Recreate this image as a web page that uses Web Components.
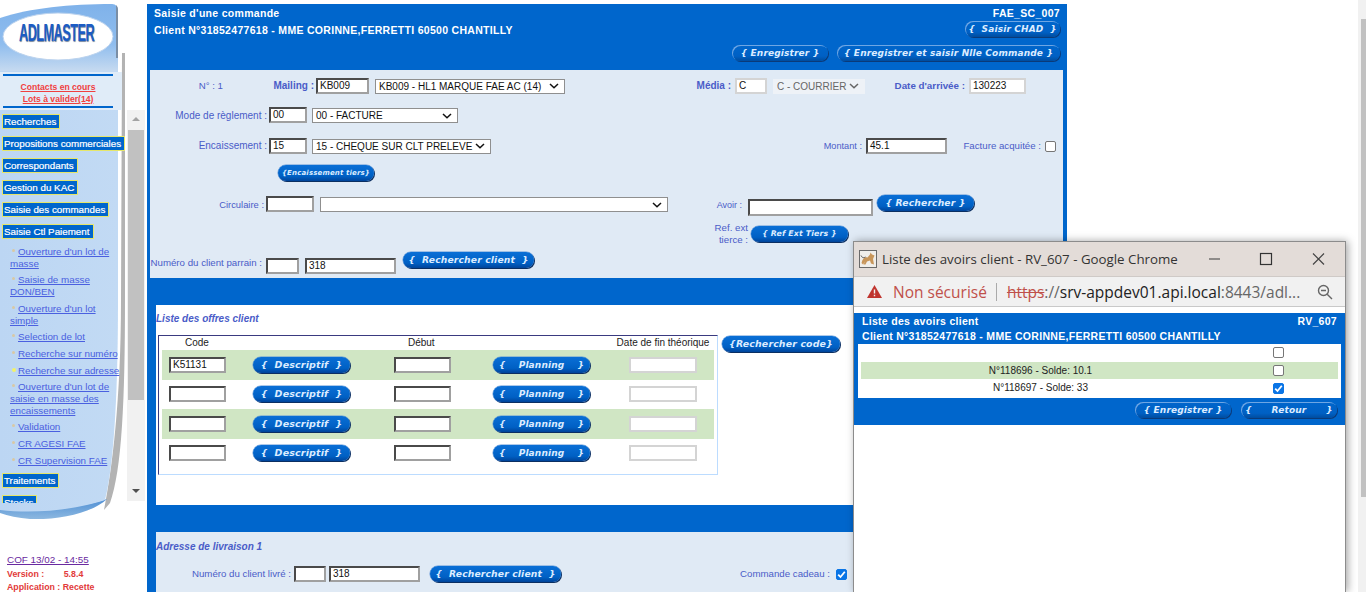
<!DOCTYPE html>
<html lang="fr">
<head>
<meta charset="utf-8">
<title>Saisie d'une commande</title>
<style>
  html, body { margin: 0; height: 592px; overflow: hidden; background: #fff; }
  body { font-family: "Liberation Sans", Arial, sans-serif; font-size: 10px; position: relative; }
  #page { display: flex; height: 592px; }
  adl-pagebar { margin-left: auto; }
</style>
</head>
<body>
<div id="page">
  <adl-sidebar></adl-sidebar>
  <adl-order></adl-order>
  <adl-pagebar></adl-pagebar>
</div>
<adl-avoirs></adl-avoirs>
<script>
class AdlBtn extends HTMLElement {
  constructor() {
    super();
    this.attachShadow({ mode: 'open' });
    const w = this.getAttribute('w') || 97;
    const size = this.getAttribute('size') || 9.2;
    this.shadowRoot.innerHTML = `
      <style>
        :host { display: inline-flex; flex: none; }
        span {
          display: flex; align-items: center; justify-content: center;
          width: ${w}px; height: 16px; box-sizing: border-box; white-space: pre;
          border-radius: 8px; background: linear-gradient(#0a6fd6, #0060c4 70%, #00449a);
          box-shadow: 1px 1px 0 #0b2f62, 0 0 0 .5px #5c93d6;
          color: #dcecff; font: italic bold ${size}px/16px "DejaVu Sans", sans-serif; letter-spacing: .15px;
        }
        :host([ghost]) span {
          background: linear-gradient(#0066cc, #0060c4 70%, #004c9e);
          box-shadow: 1px 1px 0 #0b3a78, inset 1px 1px 0 #6ea6e4;
        }
      </style>
      <span><slot></slot></span>`;
  }
}
customElements.define('adl-btn', AdlBtn);

class AdlInput extends HTMLElement {
  constructor() {
    super();
    this.attachShadow({ mode: 'open' });
    const w = this.getAttribute('w') || 50;
    const h = this.getAttribute('h') || 16;
    this.shadowRoot.innerHTML = `
      <style>
        :host { display: inline-block; flex: none; }
        div {
          width: ${w}px; height: ${h}px; box-sizing: border-box; background: #fff;
          border: 2px solid; border-color: #4a4a4a #a0a0a0 #a0a0a0 #4a4a4a;
          padding: 0 2px; font: 10px/${h - 4}px "Liberation Sans", sans-serif; color: #111;
          overflow: hidden; white-space: nowrap;
        }
        :host([off]) div { border-color: #d4d4d4; }
      </style>
      <div><slot></slot></div>`;
  }
}
customElements.define('adl-input', AdlInput);

class AdlSelect extends HTMLElement {
  constructor() {
    super();
    this.attachShadow({ mode: 'open' });
    const w = this.getAttribute('w') || 100;
    this.shadowRoot.innerHTML = `
      <style>
        :host { display: inline-block; flex: none; }
        div {
          display: flex; align-items: center; justify-content: space-between;
          width: ${w}px; height: 15px; box-sizing: border-box; background: #fff;
          border: 1px solid #8f8f8f; padding: 0 5px 0 3px;
          font: 10px/13px "Liberation Sans", sans-serif; color: #111; white-space: nowrap;
        }
        svg { flex: none; }
        :host([off]) div { background: #eef2f7; border-color: #eef2f7; color: #666; }
      </style>
      <div><span><slot></slot></span>
        <svg width="10" height="6" viewBox="0 0 10 6"><path d="M1 1 5 4.8 9 1" fill="none" stroke="currentColor" stroke-width="1.5"/></svg>
      </div>`;
  }
}
customElements.define('adl-select', AdlSelect);

class AdlCheck extends HTMLElement {
  constructor() {
    super();
    this.attachShadow({ mode: 'open' });
    const on = this.hasAttribute('checked');
    this.shadowRoot.innerHTML = `
      <style>
        :host { display: inline-block; flex: none; width: 11px; height: 11px; }
        div { width: 11px; height: 11px; box-sizing: border-box; border-radius: 2px; background: #fff; border: 1px solid #767676; }
        div.on { background: #0a75e6; border-color: #0a75e6; }
        svg { display: block; }
      </style>
      <div class="${on ? 'on' : ''}">${on ? '<svg width="9" height="9" viewBox="0 0 9 9"><path d="M1.2 4.6 3.5 7 7.8 1.8" fill="none" stroke="#fff" stroke-width="1.8"/></svg>' : ''}</div>`;
  }
}
customElements.define('adl-check', AdlCheck);

// browser scrollbar of the page, cut by the right edge of the capture
class AdlPagebar extends HTMLElement {
  constructor() {
    super();
    this.attachShadow({ mode: 'open' });
    this.shadowRoot.innerHTML = `
      <style>
        :host { display: block; flex: none; width: 8px; height: 592px; background: #f1f1f1; }
        i { display: block; width: 5px; height: 478px; margin: 19px 0 0 3px; background: #c1c1c1; }
      </style>
      <i></i>`;
  }
}
customElements.define('adl-pagebar', AdlPagebar);

class AdlSidebar extends HTMLElement {
  constructor() {
    super();
    this.attachShadow({ mode: 'open' });
    const tops = ['Recherches', 'Propositions commerciales', 'Correspondants', 'Gestion du KAC', 'Saisie des commandes', 'Saisie Ctl Paiement'];
    const subs = ['Ouverture d\'un lot de masse', 'Saisie de masse DON/BEN', 'Ouverture d\'un lot simple', 'Selection de lot', 'Recherche sur numéro', 'Recherche sur adresse', 'Ouverture d\'un lot de saisie en masse des encaissements', 'Validation', 'CR AGESI FAE', 'CR Supervision FAE'];
    this.shadowRoot.innerHTML = `
      <style>
        :host { display: block; flex: none; width: 147px; height: 592px; position: relative; font: 10px/11.7px "Liberation Sans", sans-serif; }
        .art { position: absolute; left: 0; top: 0; }
        .logo { position: absolute; left: 19px; top: 21px; font: bold 24px/24px "Liberation Sans", sans-serif; letter-spacing: -1px; color: #1c5cc4; text-shadow: 1px 1px 1px #7d8ba0; transform: scaleX(.53); transform-origin: left; }
        .alerts { position: absolute; left: 3px; top: 74px; width: 110px; height: 34px; padding-top: 5px; box-sizing: border-box; text-align: center; color: #f04040; font-weight: bold; font-size: 8.6px; line-height: 12px; text-decoration: underline; border-top: 2px solid #0066cc; border-bottom: 2px solid #0066cc; }
        .menu { position: absolute; left: 2px; top: 114px; width: 126px; height: 389px; overflow: hidden; }
        .top { display: table; box-sizing: border-box; height: 15px; padding: 0 3px 0 1px; margin-bottom: 7px; border: 1px solid #e6e66a; background: #0066cc; color: #fff; font-size: 9.8px; line-height: 13px; white-space: nowrap; -webkit-text-stroke: .2px #fff; }
        .subs { margin: 3px 0 6.5px 8px; width: 106px; }
        .sub { margin-bottom: 5px; color: #4a60e0; text-decoration: underline; text-indent: 8px; font-size: 9.8px; position: relative; }
        .sub::before { content: ""; position: absolute; left: 2px; top: 3px; width: 3px; height: 3px; border-radius: 50%; background: #d9c8a4; }
        .sub.hot::before { background: #f2f26a; width: 4px; height: 4px; }
        .sub.nw { white-space: nowrap; }
        .scroll { position: absolute; left: 127px; top: 110px; width: 18px; height: 391px; background: #f1f1f1; }
        .scroll i { position: absolute; left: 1px; top: 20px; width: 16px; height: 270px; background: #c1c1c1; }
        .scroll b { position: absolute; left: 5px; width: 0; height: 0; border: 4px solid transparent; }
        .scroll .u { top: 7px; border-bottom: 4px solid #a3a3a3; border-top: 0; }
        .scroll .d { top: 379px; border-top: 4px solid #505050; border-bottom: 0; }
        .foot { position: absolute; left: 7px; top: 553px; color: #e23a3a; font-weight: bold; font-size: 8.8px; line-height: 12.5px; white-space: pre; }
        .foot a { display: block; color: #6a2aa0; font-weight: 400; font-size: 9.9px; line-height: 13px; text-decoration: underline; margin-bottom: 2px; }
      </style>
      <svg class="art" width="130" height="530" viewBox="0 0 130 530">
        <defs>
          <linearGradient id="h" x1="0" y1="0" x2="0" y2="1"><stop offset="0" stop-color="#7fb2ea"/><stop offset=".6" stop-color="#8fbdee"/><stop offset="1" stop-color="#c6daf0"/></linearGradient>
          <linearGradient id="b" x1="0" y1="0" x2="1" y2="0"><stop offset="0" stop-color="#bcd6f3"/><stop offset="1" stop-color="#c2daf4"/></linearGradient>
          <linearGradient id="c" x1="0" y1="0" x2="0" y2="1"><stop offset="0" stop-color="#4f8fd4"/><stop offset="1" stop-color="#8db8e0"/></linearGradient>
        </defs>
        <path d="M122 53 H125 V300 C125 400 122 470 110 503 L104 510 C112 470 121 400 121 300Z" fill="#9a9a9a" opacity=".75"/>
        <path d="M0 505 C40 512 80 508 107 499 C92 513 60 520 30 519 C18 518 8 516 0 513Z" fill="url(#c)"/>
        <path d="M0 71 H118 V300 C118 380 115 460 105 500 C75 510 35 514 0 510Z" fill="url(#b)"/>
        <rect x="0" y="72" width="122" height="38" fill="#e0ecf8"/>
        <path d="M0 18 C30 8 70 4 112 4 C116 4 118 7 118 12 V71 H0Z" fill="url(#h)"/>
        <path d="M116 5 C118 7 118 8 118 12 V58 L116 58Z" fill="#7a8ea5"/>
        <ellipse cx="58" cy="36.5" rx="55" ry="23.5" fill="#fff"/>
        <ellipse cx="58" cy="36.5" rx="55" ry="23.5" fill="none" stroke="#bcd3ee" stroke-width="1"/>
      </svg>
      <div class="logo">ADLMASTER</div>
      <div class="alerts">Contacts en cours<br>Lots à valider(14)</div>
      <div class="menu">
        ${tops.map(t => `<div class="top">${t}</div>`).join('')}
        <div class="subs">
          ${subs.map((s, i) => `<div class="sub${i === 5 ? ' hot' : ''}${i === 4 || i === 5 ? ' nw' : ''}">${s}</div>`).join('')}
        </div>
        <div class="top">Traitements</div>
        <div class="top">Stocks</div>
      </div>
      <div class="scroll"><b class="u"></b><i></i><b class="d"></b></div>
      <div class="foot"><a>COF 13/02 - 14:55</a>Version :        5.8.4
Application : Recette</div>`;
  }
}
customElements.define('adl-sidebar', AdlSidebar);

class AdlOfferRow extends HTMLElement {
  constructor() {
    super();
    this.attachShadow({ mode: 'open' });
    const code = this.getAttribute('code') || '';
    this.shadowRoot.innerHTML = `
      <style>
        :host { display: flex; align-items: center; height: 29.5px; padding-left: 7px; box-sizing: border-box; background: var(--row, #fff); }
      </style>
      <adl-input w="57">${code}</adl-input>
      <adl-btn w="97" size="9.5" style="margin-left:27px">{  Descriptif  }</adl-btn>
      <adl-input w="57" style="margin-left:44px"></adl-input>
      <adl-btn w="97" size="9" style="margin-left:42px">{    Planning    }</adl-btn>
      <adl-input w="68" off style="margin-left:39px"></adl-input>`;
  }
}
customElements.define('adl-offer-row', AdlOfferRow);

class AdlOrder extends HTMLElement {
  constructor() {
    super();
    this.attachShadow({ mode: 'open' });
    this.shadowRoot.innerHTML = `
      <style>
        :host { display: block; flex: none; width: 920px; height: 588px; margin-top: 4px; background: #0066cc; overflow: hidden; font: 10px/12px "Liberation Sans", sans-serif; color: #4a5cc8; }
        .head { height: 65px; box-sizing: border-box; padding: 3px 7px 0 7px; color: #fff; font: bold 10.5px/12px "Liberation Sans", sans-serif; letter-spacing: .3px; display: flex; justify-content: space-between; }
        .head p { margin: 0 0 5px; white-space: nowrap; }
        .head .r { display: flex; flex-direction: column; align-items: flex-end; }
        .head .r b { display: block; }
        .head .acts { display: flex; gap: 9px; margin-top: 8px; }
        .form { margin: 1px 4px 0 3px; height: 208px; background: #e0eaf5; position: relative; box-sizing: border-box; }
        .form .row { left: -1px; }
        .row { display: flex; align-items: center; position: absolute; left: 0; right: 0; }
        .row.top { align-items: flex-start; }
        .band { height: 27px; background: #0066cc; }
        .inner { margin: 0 4px 0 9px; }
        .offers { height: 200px; background: #fff; box-sizing: border-box; padding: 8px 0 0 0; position: relative; }
        h4 { margin: 0; font: italic bold 10px/12px "Liberation Sans", sans-serif; color: #4a5cc8; white-space: nowrap; }
        .lbl { white-space: nowrap; text-align: right; flex: none; }
        span.lbl { font-size: 9.7px; }
        .tbl { margin: 10px 0 0 2px; width: 560px; height: 140px; box-sizing: border-box; border: 1px solid; border-color: #3a3a80 #bcdcff #bcdcff #3a3a80; padding: 0 3px; color: #222; }
        .cols { display: flex; height: 14px; line-height: 14px; white-space: nowrap; }
        .tbl adl-offer-row:nth-of-type(odd) { --row: #d0e6c4; }
        .liv { height: 60px; background: #e0eaf5; position: relative; }
      </style>
      <div class="head">
        <div><p>Saisie d'une commande</p><p>Client N°31852477618 - MME CORINNE,FERRETTI 60500 CHANTILLY</p></div>
        <div class="r">
          <b>FAE_SC_007</b>
          <adl-btn ghost w="95" size="9" style="margin-top:2px">{  Saisir CHAD  }</adl-btn>
          <div class="acts">
            <adl-btn ghost w="96" size="9">{ Enregistrer }</adl-btn>
            <adl-btn ghost w="223" size="9">{ Enregistrer et saisir Nlle Commande }</adl-btn>
          </div>
        </div>
      </div>
      <div class="form">
        <div class="row" style="top:8px">
          <span class="lbl" style="width:74px">N° : 1</span>
          <b class="lbl" style="width:91px">Mailing :</b>
          <adl-input w="53" style="margin-left:2px">KB009</adl-input>
          <adl-select w="190" style="margin-left:6px">KB009 - HL1 MARQUE FAE AC (14)</adl-select>
          <b class="lbl" style="width:166px">Média :</b>
          <adl-input w="32" off style="margin-left:4px">C</adl-input>
          <adl-select w="92" off style="margin-left:6px">C - COURRIER</adl-select>
          <b class="lbl" style="width:100px;font-size:9.8px">Date d'arrivée :</b>
          <adl-input w="57" off style="margin-left:4px">130223</adl-input>
        </div>
        <div class="row" style="top:37px">
          <span class="lbl" style="width:118px;font-size:10px;margin-top:1px">Mode de règlement :</span>
          <adl-input w="38" style="margin-left:2px">00</adl-input>
          <adl-select w="146" style="margin-left:5px;margin-top:1px">00 - FACTURE</adl-select>
        </div>
        <div class="row" style="top:68px">
          <span class="lbl" style="width:118px;font-size:10px">Encaissement :</span>
          <adl-input w="38" style="margin-left:2px">15</adl-input>
          <adl-select w="179" style="margin-left:5px">15 - CHEQUE SUR CLT PRELEVE</adl-select>
          <span class="lbl" style="width:371px;font-size:9.2px">Montant :</span>
          <adl-input w="81" style="margin-left:4px">45.1</adl-input>
          <span class="lbl" style="width:94px">Facture acquitée :</span>
          <adl-check style="margin-left:4px"></adl-check>
        </div>
        <div class="row" style="top:95px">
          <adl-btn w="96" size="7" style="margin-left:129px">{Encaissement tiers}</adl-btn>
        </div>
        <div class="row top" style="top:125px">
          <span class="lbl" style="width:115px;margin-top:4px;font-size:9.4px">Circulaire :</span>
          <adl-input w="48" style="margin-left:2px;margin-top:1px"></adl-input>
          <adl-select w="348" style="margin-left:6px;margin-top:2px"></adl-select>
          <span class="lbl" style="width:74px;margin-top:4px;font-size:9px">Avoir :</span>
          <adl-input w="125" h="17" style="margin-left:6px;margin-top:4px"></adl-input>
          <adl-btn w="97" style="margin-left:4px">{ Rechercher }</adl-btn>
        </div>
        <div class="row" style="top:152px;left:564px;right:auto">
          <span class="lbl" style="width:34px">Ref. ext<br>tierce :</span>
          <adl-btn w="97" size="7.8" style="margin-left:3px">{ Ref Ext Tiers }</adl-btn>
        </div>
        <div class="row top" style="top:182px">
          <span class="lbl" style="width:113px;margin-top:5px">Numéro du client parrain :</span>
          <adl-input w="33" style="margin-left:4px;margin-top:6px"></adl-input>
          <adl-input w="91" style="margin-left:6px;margin-top:6px">318</adl-input>
          <adl-btn w="131" size="9.2" style="margin-left:7px">{  Rechercher client  }</adl-btn>
        </div>
      </div>
      <div class="inner">
        <div class="band"></div>
        <div class="offers">
          <h4>Liste des offres client</h4>
          <div class="tbl">
            <div class="cols"><span style="margin-left:23px">Code</span><span style="margin-left:199px">Début</span><span style="margin-left:182px">Date de fin théorique</span></div>
            <adl-offer-row code="K51131"></adl-offer-row>
            <adl-offer-row></adl-offer-row>
            <adl-offer-row></adl-offer-row>
            <adl-offer-row></adl-offer-row>
          </div>
          <adl-btn w="118" size="9.4" style="position:absolute;left:566px;top:31px">{Rechercher code}</adl-btn>
        </div>
        <div class="band"></div>
        <div class="liv">
          <h4 style="padding:9px 0 0 0">Adresse de livraison 1</h4>
          <div class="row" style="top:34px">
            <span class="lbl" style="width:135px">Numéro du client livré :</span>
            <adl-input w="32" style="margin-left:3px"></adl-input>
            <adl-input w="91" style="margin-left:3px">318</adl-input>
            <adl-btn w="131" size="9.2" style="margin-left:10px">{  Rechercher client  }</adl-btn>
            <span class="lbl" style="width:269px">Commande cadeau :</span>
            <adl-check checked style="margin-left:6px"></adl-check>
          </div>
        </div>
      </div>`;
  }
}
customElements.define('adl-order', AdlOrder);

class AdlAvoirs extends HTMLElement {
  constructor() {
    super();
    this.attachShadow({ mode: 'open' });
    this.shadowRoot.innerHTML = `
      <style>
        :host { display: block; position: absolute; left: 853px; top: 241px; width: 493px; height: 351px; background: #fff; box-sizing: border-box; border: 1px solid #8c8c8c; border-bottom: 0; box-shadow: 2px 0 8px rgba(0,0,0,.35); }
        .title { height: 34px; background: #e3dcd8; display: flex; align-items: center; font: 13.3px/18px "Open Sans", sans-serif; color: #333; white-space: nowrap; }
        .title svg.fav { margin: 0 5px 0 5px; flex: none; }
        .ctl { display: flex; margin-left: auto; }
        .ctl svg { display: block; width: 53px; height: 34px; }
        .addr { height: 31px; background: #f1f1f1; border-top: 1px solid #cfcac7; border-bottom: 1px solid #c9c9c9; box-sizing: border-box; display: flex; align-items: center; font: 15.5px/20px "Open Sans", sans-serif; white-space: nowrap; color: #666; padding-left: 13px; }
        .addr .ns { color: #c0504a; margin-left: 11px; }
        .addr i { width: 1px; height: 18px; background: #aaa; margin: 0 10px 0 9px; }
        .addr s { color: #c0504a; }
        .addr .h { color: #222; }
        .addr svg.z { margin-left: auto; margin-right: 12px; }
        .blue { margin: 6px 0 0 0; height: 112px; background: #0066cc; color: #fff; box-sizing: border-box; padding: 1px 8px 0 8px; font: bold 10.5px/14.5px "Liberation Sans", sans-serif; letter-spacing: .3px; }
        .hd { display: flex; justify-content: space-between; }
        .tb { margin: 1px -4px 0; height: 54px; background: #fff; border-left: 3px solid #fff; color: #222; font: 10px/18px "Liberation Sans", sans-serif; letter-spacing: 0; padding: 0 3px 0 0; box-sizing: border-box; }
        .tr { display: flex; align-items: center; height: 17.7px; position: relative; }
        .tr span { width: 359px; text-align: center; }
        .tr adl-check { margin-left: 53px; }
        .tr.g { background: #d0e6c4; }
        .acts { display: flex; justify-content: flex-end; gap: 10px; margin-top: 4px; }
      </style>
      <div class="title">
        <svg class="fav" width="18" height="18" viewBox="0 0 18 18"><rect x=".5" y=".5" width="17" height="17" fill="#f0eeea" stroke="#6a6a6a"/><path d="M2.5 13 C3.5 8 6 6.5 8.5 7.5 L11 4.5 11.5 2.5 13 4.5 15.5 5.5 14 9 15 14.5 12 13.5 11 10.5 8 11.5 6.5 14.5 4.5 14.5 6 11.5 4 14.5Z" fill="#c8965a"/><path d="M2 5.5 C3 8 5 8 6.5 7" fill="none" stroke="#555" stroke-width="1"/></svg>
        <span>Liste des avoirs client - RV_607 - Google Chrome</span>
        <div class="ctl">
          <svg viewBox="0 0 53 34"><path d="M23 17H34" stroke="#555" stroke-width="1.2"/></svg>
          <svg viewBox="0 0 53 34"><rect x="21.5" y="11.5" width="11" height="11" fill="none" stroke="#333" stroke-width="1.2"/></svg>
          <svg viewBox="0 0 53 34"><path d="M21 11.5 32 22.5M32 11.5 21 22.5" stroke="#444" stroke-width="1.2"/></svg>
        </div>
      </div>
      <div class="addr">
        <svg width="15" height="13" viewBox="0 0 15 13"><path d="M7.5 0 15 13H0Z" fill="#c0352f"/><path d="M7.5 4.5V8.5M7.5 9.8V11.2" stroke="#f1f1f1" stroke-width="1.4"/></svg>
        <span class="ns">Non sécurisé</span><i></i>
        <span><s>https</s>://<span class="h">srv-appdev01.api.local</span>:8443/adl...</span>
        <svg class="z" width="16" height="16" viewBox="0 0 16 16"><circle cx="6.5" cy="6.5" r="5" fill="none" stroke="#666" stroke-width="1.4"/><path d="M10.2 10.2 15 15M4 6.5H9" stroke="#666" stroke-width="1.4"/></svg>
      </div>
      <div class="blue">
        <div class="hd"><span>Liste des avoirs client</span><span>RV_607</span></div>
        <div style="white-space:nowrap">Client N°31852477618 - MME CORINNE,FERRETTI 60500 CHANTILLY</div>
        <div class="tb">
          <div class="tr"><span></span><adl-check></adl-check></div>
          <div class="tr g"><span>N°118696 - Solde: 10.1</span><adl-check></adl-check></div>
          <div class="tr"><span>N°118697 - Solde: 33</span><adl-check checked></adl-check></div>
        </div>
        <div class="acts">
          <adl-btn ghost w="96" size="9">{ Enregistrer }</adl-btn>
          <adl-btn ghost w="96" size="9">{      Retour      }</adl-btn>
        </div>
      </div>`;
  }
}
customElements.define('adl-avoirs', AdlAvoirs);
</script>
</body>
</html>
